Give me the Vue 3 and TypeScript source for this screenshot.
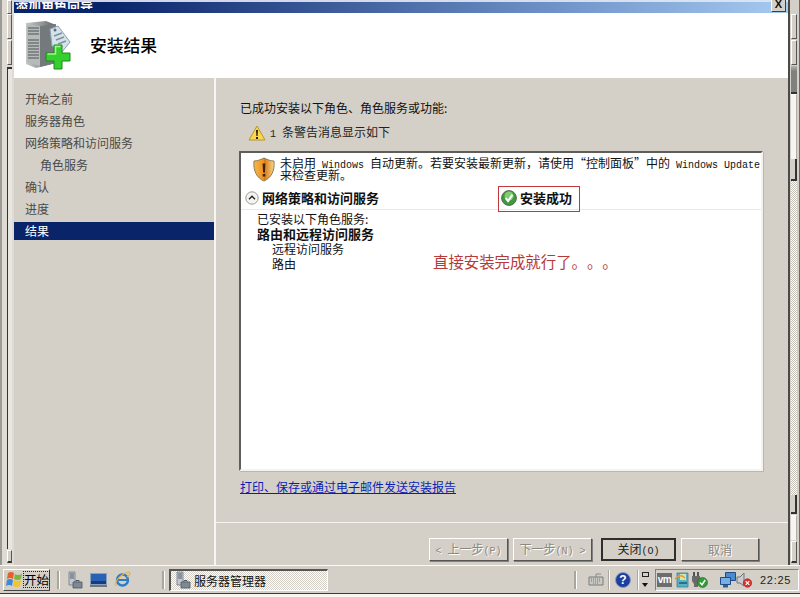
<script setup lang="ts">
// 添加角色向导 — 结果页
const navItems = [
  { label: '开始之前' },
  { label: '服务器角色' },
  { label: '网络策略和访问服务' },
  { label: '角色服务', sub: true },
  { label: '确认' },
  { label: '进度' },
  { label: '结果', active: true },
]
</script>

<template>
  <div class="desk">
    <div class="work">
      <div class="rail rail-left">
        <div class="seg seg-cap" />
        <div class="seg seg-a" />
        <div class="seg seg-b" />
        <div class="seg-long" />
        <div class="seg seg-end" />
      </div>

      <div class="dialog">
        <div class="title">
          <span class="title-text">添加角色向导</span>
          <span class="close">X</span>
        </div>

        <div class="head">
          <svg class="head-icon" width="52" height="50" viewBox="0 0 52 50">
            <defs>
              <linearGradient id="srv" x1="0" x2="1" y1="0" y2="0">
                <stop offset="0" stop-color="#c6c8c8" />
                <stop offset="0.55" stop-color="#8f9496" />
                <stop offset="1" stop-color="#5c6164" />
              </linearGradient>
            </defs>
            <path d="M4 3 L24 1 L34 5 L34 43 L14 48 L4 44 Z" fill="url(#srv)" />
            <path d="M5 5 L18 6 L18 46 L5 42 Z" fill="#b6baba" />
            <path d="M6 8h11M6 11h11M6 14h11M6 20h11M6 23h11M6 26h11M6 29h11M6 32h11M6 35h11M6 38h11" stroke="#4d5254" stroke-width="1.2" />
            <path d="M18 6 L34 4 L34 43 L18 47 Z" fill="#74797c" />
            <path d="M28 9 L36 6 L48 22 L40 32 L30 26 Z" fill="#d4e2ea" stroke="#8ba0ae" />
            <circle cx="33" cy="10" r="1.500" fill="#5e6f7a" />
            <path d="M32 16 L40 13 M34 20 L42 17 M36 24 L44 21" stroke="#7d909c" stroke-width="1.400" />
            <path d="M32 25 h8 v8 h8 v8 h-8 v8 h-8 v-8 h-8 v-8 h8 Z" fill="#36d02e" stroke="#1d8a1a" />
            <path d="M25.500 34 h8 v-7.500 h5" fill="none" stroke="#a4f492" stroke-width="1.500" />
          </svg>
          <h1 class="head-text">安装结果</h1>
        </div>

        <div class="body">
          <nav class="nav">
            <div
              v-for="item in navItems"
              :key="item.label"
              class="nav-item"
              :class="{ sub: item.sub, active: item.active }"
            >{{ item.label }}</div>
          </nav>

          <div class="panel">
            <div class="main">
              <p class="intro">已成功安装以下角色、角色服务或功能:</p>
              <div class="warn-line">
                <svg width="18" height="16" viewBox="0 0 18 16">
                  <path d="M9 1 L17 15 H1 Z" fill="#fbd84a" stroke="#b8942a" stroke-linejoin="round" />
                  <path d="M8 5h2l-.4 6h-1.200z M8 12h2v2H8z" fill="#222" />
                </svg>
                <span><span class="latin">1 </span>条警告消息显示如下</span>
              </div>

              <div class="result-box">
                <div class="notice">
                  <svg class="shield" width="22" height="25" viewBox="0 0 22 25">
                    <defs>
                      <linearGradient id="sh" x1="0" x2="1" y1="0" y2="0">
                        <stop offset="0" stop-color="#f7b84c" />
                        <stop offset="0.5" stop-color="#ef8e1e" />
                        <stop offset="0.5" stop-color="#d87412" />
                        <stop offset="1" stop-color="#f6d98a" />
                      </linearGradient>
                    </defs>
                    <path d="M11 1 C15 3 18 4 21 4 C22 14 18 21 11 24 C4 21 0 14 1 4 C4 4 7 3 11 1 Z" fill="url(#sh)" stroke="#8f7d56" />
                    <path d="M9.600 6.500h2.800l-.5 9h-1.800z M9.700 17h2.600v2.600H9.700z" fill="#3c2208" />
                  </svg>
                  <div class="notice-text">
                    <div class="notice-line">未启用<span class="latin"> Windows </span>自动更新。若要安装最新更新&#xFF0C;请使用“控制面板”中的<span class="latin"> Windows Update</span></div>
                    <div class="notice-line">来检查更新。</div>
                  </div>
                </div>

                <div class="section-head">
                  <svg width="14" height="14" viewBox="0 0 14 14">
                    <circle cx="7" cy="7" r="6.200" fill="#f4f4f2" stroke="#9a9a98" />
                    <path d="M4 8.200 L7 5.200 L10 8.200" fill="none" stroke="#222" stroke-width="1.400" />
                  </svg>
                  <strong class="section-name">网络策略和访问服务</strong>
                  <div class="status">
                    <svg width="16" height="16" viewBox="0 0 16 16">
                      <circle cx="8" cy="8" r="7.400" fill="#3f9a3a" stroke="#56675a" />
                      <circle cx="8" cy="6" r="4.500" fill="#7fcc72" />
                      <path d="M4.600 8 L7 11 L11.400 4.800" fill="none" stroke="#fff" stroke-width="2" />
                    </svg>
                    <strong>安装成功</strong>
                  </div>
                </div>

                <div class="detail">
                  <div>已安装以下角色服务:</div>
                  <strong class="detail-title">路由和远程访问服务</strong>
                  <div class="detail-sub">远程访问服务</div>
                  <div class="detail-sub">路由</div>
                </div>

                <div class="note">直接安装完成就行了。。。</div>
              </div>

              <a class="report" href="#">打印、保存或通过电子邮件发送安装报告</a>
            </div>

            <div class="buttons">
              <button class="btn off" disabled><span class="latin">&lt; </span>上一步<span class="latin">(P)</span></button>
              <button class="btn off" disabled>下一步<span class="latin">(N) &gt;</span></button>
              <button class="btn primary">关闭<span class="latin">(O)</span></button>
              <button class="btn off cancel" disabled>取消</button>
            </div>
          </div>
        </div>
      </div>

      <div class="rail rail-right">
        <div class="seg seg-a" />
        <div class="seg seg-a" />
        <div class="thumb" />
        <div class="pale" />
        <div class="seg-dark" />
        <div class="checker" />
        <div class="seg-dark short" />
        <div class="pale low" />
        <div class="seg seg-end" />
      </div>
    </div>

    <div class="taskbar">
      <button class="start">
        <svg width="18" height="18" viewBox="0 0 18 18">
          <path d="M3 2 Q6 0 9 2 L8 8 Q5 6 2 8 Z" fill="#e5602c" />
          <path d="M10 3 Q13 5 17 3 L16 8 Q13 10 9 8 Z" fill="#78b83c" />
          <path d="M2 9 Q5 7 8 9 L7 15 Q4 13 1 15 Z" fill="#3f88d8" />
          <path d="M9 9 Q12 11 16 9 L15 15 Q12 17 8 15 Z" fill="#f2c230" />
        </svg>
        <span class="start-text">开始</span>
      </button>
      <span class="grip" />
      <div class="quick">
        <svg width="16" height="18" viewBox="0 0 16 18">
          <path d="M2 1h6v13H2z" fill="#c4c8cc" stroke="#70767c" stroke-width=".8" />
          <path d="M3 3h4M3 5h4M3 7h4" stroke="#44607c" />
          <path d="M6 11h9v6H6z" fill="#7d8a94" stroke="#4d5660" stroke-width=".8" />
          <path d="M9 11v-1.500h3V11" fill="none" stroke="#4d5660" />
        </svg>
        <svg width="17" height="14" viewBox="0 0 17 14">
          <path d="M.5 .5h16v11H.5z" fill="#2c62b6" stroke="#8aa0b8" />
          <path d="M1 8h15v3H1z" fill="#163c7e" />
          <path d="M0 12h17v2H0z" fill="#6d7680" />
        </svg>
        <svg width="17" height="17" viewBox="0 0 17 17">
          <circle cx="8.500" cy="9" r="5.500" fill="none" stroke="#2e7bc6" stroke-width="2.400" />
          <path d="M4 9h9" stroke="#2e7bc6" stroke-width="2" />
          <path d="M2 15 C0 9 9 2 15 1 C17 2 15 5 13 6" fill="none" stroke="#e8b33a" stroke-width="1.200" />
        </svg>
      </div>
      <span class="grip grip-task" />
      <div class="task">
        <svg width="16" height="18" viewBox="0 0 16 18">
          <path d="M2 1h6v13H2z" fill="#c4c8cc" stroke="#70767c" stroke-width=".8" />
          <path d="M3 3h4M3 5h4M3 7h4" stroke="#44607c" />
          <path d="M6 11h9v6H6z" fill="#7d8a94" stroke="#4d5660" stroke-width=".8" />
          <path d="M9 11v-1.500h3V11" fill="none" stroke="#4d5660" />
        </svg>
        <span class="task-label">服务器管理器</span>
      </div>
      <span class="grip grip-lang" />
      <svg class="kbd" width="16" height="13" viewBox="0 0 16 13">
        <path d="M1 4h14v8H1z" fill="#c8c8c4" stroke="#7a7a76" />
        <path d="M3 6h10M3 8h10M5 10h6" stroke="#77776f" stroke-dasharray="1 1" />
        <path d="M8 4 V1 h5" fill="none" stroke="#8a8a84" />
      </svg>
      <span class="sep sep-kbd" />
      <svg class="help" width="16" height="16" viewBox="0 0 16 16">
        <circle cx="8" cy="8" r="7.500" fill="#1d3fa0" stroke="#8a97c0" />
        <text x="8" y="12" text-anchor="middle" class="help-q">?</text>
      </svg>
      <span class="sep" />
      <div class="lang-box">
        <span class="lang-top" />
        <span class="lang-arrow" />
      </div>
      <div class="tray">
        <span class="vm">vm</span>
        <svg width="17" height="17" viewBox="0 0 17 17">
          <path d="M3 2h11v14H3z" fill="#59b1c8" stroke="#3a7f90" stroke-width=".8" />
          <path d="M6 3h6v6H6z" fill="#d8e6a0" />
          <path d="M1 8 Q6 2 11 7" fill="none" stroke="#e29b3c" stroke-width="1.500" />
          <path d="M5 12h8" stroke="#2f6f80" stroke-width="2" />
        </svg>
        <svg class="plug" width="17" height="17" viewBox="0 0 17 17">
          <path d="M2 1h2v4H2zM6 1h2v4H6z" fill="#555" />
          <path d="M1 5h8v5l-2 3v3H3v-3l-2-3z" fill="#6a6a6a" />
          <circle cx="11.500" cy="11.500" r="5" fill="#2f9e36" stroke="#1f6a24" stroke-width=".6" />
          <path d="M9 11.500 L11 13.800 L14.200 9" fill="none" stroke="#fff" stroke-width="1.500" />
        </svg>
        <svg class="net" width="16" height="16" viewBox="0 0 16 16">
          <path d="M5.500 .5h10v8h-10z" fill="#4c8ad0" stroke="#1f4c86" />
          <path d="M.5 5.500h10v7h-10z" fill="#79aee4" stroke="#1f4c86" />
          <path d="M3 13h5v2.500H3z" fill="#2c5f9c" />
        </svg>
        <svg class="vol" width="16" height="16" viewBox="0 0 16 16">
          <path d="M1 5h3l4-4v13l-4-3H1z" fill="#c8ccd0" stroke="#70767c" />
          <circle cx="11.500" cy="11" r="4.200" fill="#d8342c" stroke="#a01c18" stroke-width=".6" />
          <path d="M9.700 9.200l3.600 3.600M13.300 9.200l-3.600 3.600" stroke="#fff" stroke-width="1.200" />
        </svg>
        <span class="clock">22:25</span>
      </div>
    </div>
    <div class="floor" />
  </div>
</template>

<style>
body {
  margin: 0;
  overflow: hidden;
}
</style>

<style scoped>
.desk {
  width: 800px;
  height: 597px;
  background: #d4d0c8;
  display: flex;
  flex-direction: column;
  font: 12px/15px "Noto Sans CJK SC", "Liberation Sans", sans-serif;
  text-spacing-trim: space-all;
  color: #111;
  overflow: hidden;
}
.latin {
  font-family: "Liberation Mono", monospace;
  font-size: 10px;
  white-space: pre;
}
.work {
  height: 565px;
  display: flex;
  flex: none;
}

/* 背景窗口的滚动条残影 */
.rail {
  flex: none;
  display: flex;
  flex-direction: column;
  box-sizing: border-box;
  background: #d4d0c8;
}
.rail-left {
  width: 14px;
  padding: 0 2px 2px 5px;
  border-left: 2px solid #9c9a94;
  background: #dedbd4;
}
.rail-left .seg-cap {
  height: 14px;
}
.rail-right {
  width: 12px;
  padding: 14px 2px 2px 1px;
  border-left: 2px solid #4a4a4a;
  border-right: 1px solid #6a6a66;
}
.seg {
  flex: none;
  box-sizing: border-box;
  background: #d4d0c8;
  border: 1px solid #fff;
  border-right-color: #555;
  border-bottom-color: #555;
}
.seg-a {
  height: 25px;
  margin-bottom: 1px;
}
.seg-b {
  height: 25px;
}
.seg-long {
  flex: 1;
  border-top: 2px solid #333;
  border-left: 1px solid #333;
  background: #e8e6e0;
  margin-top: 2px;
}
.seg-end {
  height: 22px;
  margin-top: 1px;
  border-bottom: 2px solid #333;
}
.rail-left .seg-end {
  height: 13px;
}
.thumb {
  flex: none;
  height: 26px;
  background: linear-gradient(#b5b5b1, #80807c 20%, #80807c);
  border-bottom: 2px solid #333;
}
.pale {
  flex: none;
  height: 64px;
  background: #f6f5f1;
  border-right: 1px solid #b0aea8;
  border-top: 1px solid #fff;
}
.pale.low {
  height: 24px;
  margin-top: 1px;
}
.seg-dark {
  flex: none;
  height: 20px;
  border-right: 2px solid #333;
  border-bottom: 2px solid #333;
  background: #d4d0c8;
}
.seg-dark.short {
  height: 17px;
}
.checker {
  flex: 1;
  background-image: conic-gradient(#fff 25%, #c4c0b8 0 50%, #fff 0 75%, #c4c0b8 0);
  background-size: 2px 2px;
}

.dialog {
  flex: 1;
  min-width: 0;
  display: flex;
  flex-direction: column;
}
.title {
  height: 11px;
  margin-top: 2px;
  flex: none;
  display: flex;
  justify-content: space-between;
  background: linear-gradient(90deg, #0a246a, #0a246a 12%, #6f93c8 70%, #a6caf0);
  position: relative;
}
.title::before {
  content: "";
  position: absolute;
  left: 0;
  right: 0;
  top: -2px;
  height: 2px;
  background: linear-gradient(90deg, #d0d4e8, #d8e4f4);
}
.title-text {
  display: block;
  height: 11px;
  line-height: 14px;
  margin-left: 1px;
  overflow: hidden;
  color: #fff;
  font-size: 13px;
  font-weight: 700;
  transform: translateY(-4px);
  clip-path: inset(4px 0 0 0);
}
.close {
  position: absolute;
  right: 2px;
  top: -2px;
  width: 15px;
  height: 12px;
  box-sizing: border-box;
  background: #d4d0c8;
  border-right: 1px solid #404040;
  border-bottom: 1px solid #404040;
  border-left: 1px solid #fff;
  text-align: center;
  font: 700 11px/9px "Liberation Sans", sans-serif;
  color: #111;
  overflow: hidden;
}
.head {
  height: 65px;
  flex: none;
  box-sizing: border-box;
  background: #fff;
  display: flex;
  align-items: center;
  padding: 0 0 1px 8px;
}
.head-icon {
  flex: none;
}
.head-text {
  margin: 0 0 0 16px;
  font-size: 16.800px;
  line-height: 22px;
  font-weight: 500;
  color: #000;
}
.body {
  flex: 1;
  display: flex;
  min-height: 0;
}
.nav {
  width: 200px;
  flex: none;
  padding-top: 12px;
  box-sizing: border-box;
}
.nav-item {
  height: 18px;
  line-height: 18px;
  margin-bottom: 4px;
  padding-left: 11px;
  color: #4a4a48;
}
.nav-item.sub {
  padding-left: 26px;
}
.nav-item.active {
  background: #0a246a;
  color: #fff;
}
.panel {
  flex: 1;
  min-width: 0;
  display: flex;
  flex-direction: column;
  border-left: 2px solid #f6f5f2;
}
.main {
  flex: 1;
  min-height: 0;
  padding: 22px 24px 0 23px;
  display: flex;
  flex-direction: column;
  align-items: flex-start;
}
.intro {
  margin: 0 0 0 1px;
  height: 15px;
}
.warn-line {
  display: flex;
  align-items: center;
  gap: 4px;
  margin: 10px 0 0 9px;
  height: 16px;
  color: #222;
}
.result-box {
  position: relative;
  box-sizing: border-box;
  width: 524px;
  height: 320px;
  margin-top: 10px;
  background: #fff;
  border: 2px solid #5e5e5c;
  border-right-color: #f4f3ef;
  border-bottom-color: #f4f3ef;
  padding: 3px 0 0 3px;
  box-shadow: 1px 1px 0 #b8b6b0;
}
.notice {
  display: flex;
  align-items: flex-start;
  padding-left: 9px;
  height: 30px;
}
.shield {
  flex: none;
  margin-top: 1px;
}
.notice-text {
  margin: 1px 0 0 5px;
  white-space: nowrap;
  color: #111;
}
.notice-line {
  height: 12px;
  line-height: 12px;
}
.section-head {
  display: flex;
  align-items: center;
  height: 24px;
  border-bottom: 1px solid #e2ebef;
  margin-left: -3px;
  padding-left: 4px;
  width: 520px;
  box-sizing: border-box;
}
.section-name {
  margin-left: 3px;
  width: 239px;
  flex: none;
  font-size: 13px;
}
.status {
  display: flex;
  align-items: center;
  gap: 3px;
  font-size: 13px;
}
.status::after {
  content: "";
  position: absolute;
  left: 257px;
  top: 33px;
  width: 82px;
  height: 26px;
  box-sizing: border-box;
  border: 1px solid #c0393a;
  pointer-events: none;
}
.detail {
  padding: 1px 0 0 13px;
  display: flex;
  flex-direction: column;
  align-items: flex-start;
}
.detail-title {
  font-weight: 700;
  font-size: 13px;
}
.detail-sub {
  padding-left: 15px;
}
.note {
  position: absolute;
  left: 192px;
  top: 97px;
  font-size: 15.400px;
  line-height: 22px;
  color: #b53a3a;
}
.report {
  margin: 8px 0 0 1px;
  color: #0a1eb4;
  text-decoration: underline;
}
.buttons {
  flex: none;
  height: 43px;
  box-sizing: border-box;
  border-top: 1px solid #f6f5f2;
  display: flex;
  gap: 5px;
  padding: 15px 0 0 213px;
}
.btn {
  height: 23px;
  width: 79px;
  box-sizing: border-box;
  padding: 0;
  font: inherit;
  background: #d4d0c8;
  border: 1px solid #fff;
  border-right-color: #555;
  border-bottom-color: #555;
  box-shadow: 1px 1px 0 #808080;
}
.btn.off {
  color: #8a8880;
  text-shadow: 1px 1px 0 #fff;
}
.btn.primary {
  width: 75px;
  margin-left: 4px;
  border: 2px solid #2e2e2e;
  box-shadow: none;
  color: #222;
}
.btn.cancel {
  width: 78px;
}

.taskbar {
  flex: none;
  height: 29px;
  box-sizing: border-box;
  border-top: 1px solid #fbfaf8;
  border-bottom: 1px solid #3a3a38;
  display: flex;
  align-items: center;
  padding: 0 2px 0 3px;
}
.start {
  flex: none;
  width: 47px;
  height: 22px;
  box-sizing: border-box;
  padding: 0 0 0 1px;
  display: flex;
  align-items: center;
  gap: 1px;
  background: #d4d0c8;
  border: 1px solid #fff;
  border-right-color: #444;
  border-bottom-color: #444;
  font: inherit;
  white-space: nowrap;
}
.start svg {
  flex: none;
}
.start-text {
  flex: none;
  outline: 1px dotted #222;
  font-size: 12.500px;
  line-height: 15px;
}
.grip {
  flex: none;
  width: 2px;
  height: 18px;
  background: #a8a69e;
  border-right: 1px solid #fff;
  margin-left: 7px;
}
.quick {
  flex: none;
  width: 102px;
  display: flex;
  align-items: center;
  gap: 7px;
  padding-left: 7px;
  box-sizing: border-box;
}
.grip-task {
  margin-left: 0;
}
.task {
  flex: none;
  width: 159px;
  height: 22px;
  margin-left: 4px;
  box-sizing: border-box;
  border: 2px solid #555;
  border-right: 1px solid #fff;
  border-bottom: 1px solid #fff;
  background-image: conic-gradient(#fff 25%, #d4d0c8 0 50%, #fff 0 75%, #d4d0c8 0);
  background-size: 2px 2px;
  display: flex;
  align-items: center;
  gap: 3px;
  padding-left: 4px;
}
.task-label {
  color: #111;
}
.grip-lang {
  margin-left: 246px;
}
.kbd {
  margin-left: 11px;
  flex: none;
}
.sep {
  flex: none;
  width: 1px;
  height: 20px;
  background: #a8a69e;
  border-right: 1px solid #fff;
  margin-left: 6px;
}
.sep-kbd {
  margin-left: 4px;
}
.help {
  flex: none;
  margin-left: 5px;
}
.help-q {
  fill: #fff;
  font: 700 12px "Liberation Sans", sans-serif;
}
.lang-box {
  flex: none;
  width: 14px;
  margin-left: -1px;
  display: flex;
  flex-direction: column;
  align-items: center;
  gap: 6px;
}
.lang-top {
  width: 7px;
  height: 5px;
  border: 1px solid #222;
  box-sizing: border-box;
}
.lang-arrow {
  width: 0;
  height: 0;
  border: 3px solid transparent;
  border-top: 4px solid #111;
  border-bottom: 0;
}
.tray {
  flex: none;
  margin-left: 3px;
  width: 144px;
  height: 22px;
  box-sizing: border-box;
  border: 1px solid #808080;
  border-right-color: #fff;
  border-bottom-color: #fff;
  display: flex;
  align-items: center;
  padding-left: 1px;
}
.vm {
  flex: none;
  width: 15px;
  height: 14px;
  background: #6b6e70;
  color: #fff;
  font: 700 10px/13px "Liberation Sans", sans-serif;
  text-align: center;
  margin-right: 2px;
  letter-spacing: -.5px;
}
.net {
  margin-left: 12px;
}
.vol {
  margin-left: 0;
}
.clock {
  margin-left: 8px;
  font: 11px/14px "Liberation Sans", sans-serif;
  letter-spacing: .7px;
  color: #222;
}
.floor {
  flex: 1;
  background: #f7f6f3;
}
</style>
